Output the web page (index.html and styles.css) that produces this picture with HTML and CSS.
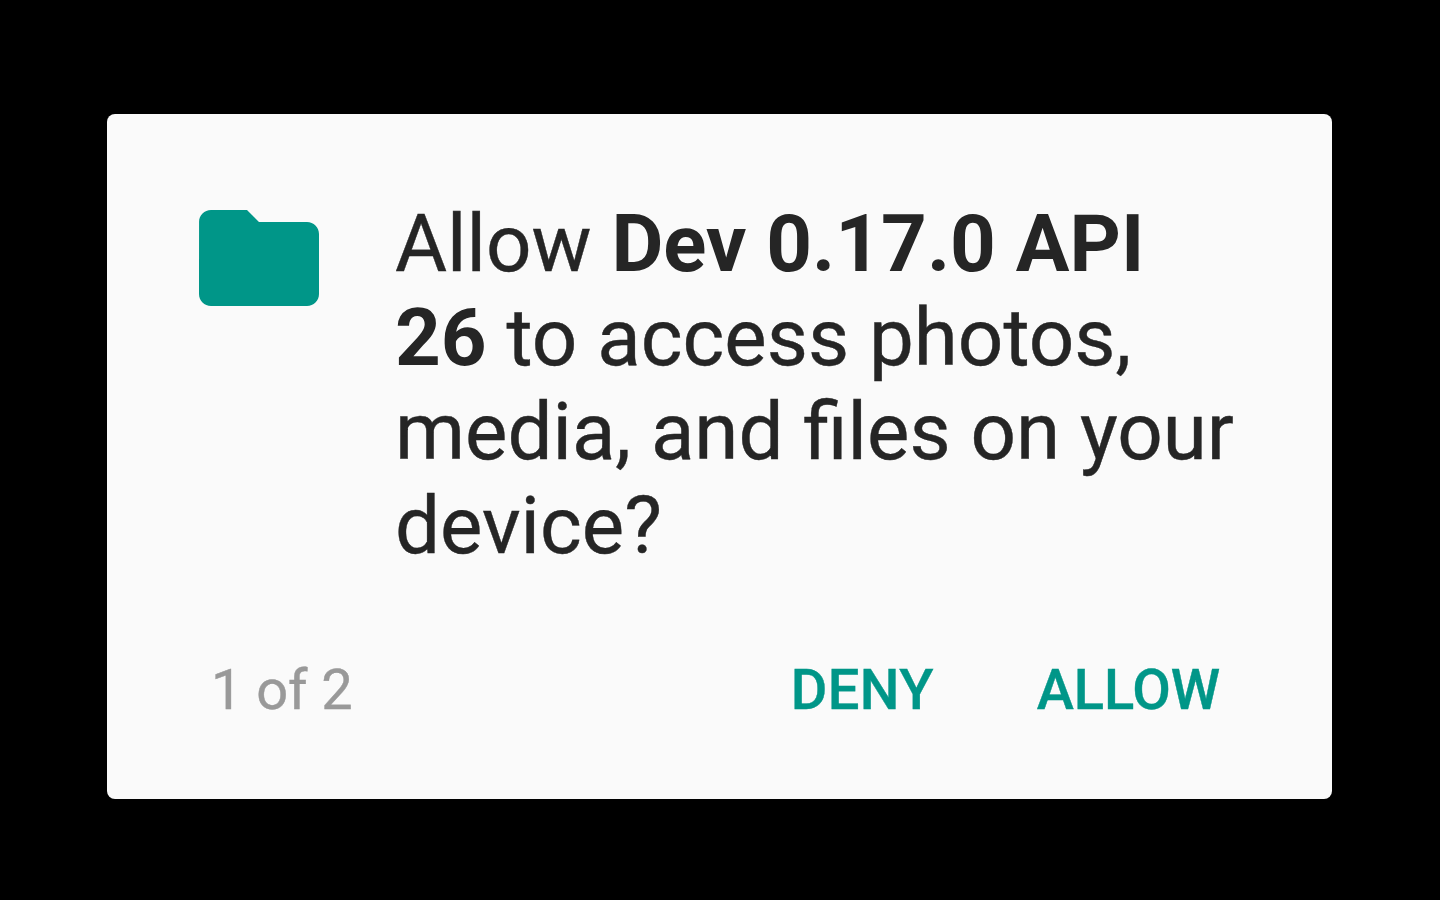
FILE: index.html
```html
<!DOCTYPE html>
<html lang="en">
<head>
<meta charset="utf-8">
<title>Permission request</title>
<link rel="stylesheet" href="styles.css">
</head>
<body>
<main class="dialog" role="dialog" aria-labelledby="message">
  <div class="content">
    <svg class="folder" viewBox="2 4 20 16" aria-hidden="true"><path d="M10 4H4c-1.1 0-1.99.9-1.99 2L2 18c0 1.1.9 2 2 2h16c1.1 0 2-.9 2-2V8c0-1.1-.9-2-2-2h-8l-2-2z"/></svg>
    <p class="message" id="message">Allow <b>Dev 0.17.0 API<br>26</b> to access photos,<br>media, and files on your<br>device?</p>
  </div>
  <div class="actions">
    <span class="count">1 of 2</span>
    <button class="button deny">DENY</button>
    <button class="button allow">ALLOW</button>
  </div>
</main>
</body>
</html>
```
FILE: styles.css
```css
* { box-sizing: border-box; }
body {
  margin: 0;
  height: 900px;
  padding: 114px 108px 101px 107px;
  background: #000;
  font-family: Roboto, sans-serif;
  overflow: hidden;
}
.dialog {
  height: 685px;
  padding: 83px 92px 0;
  border-radius: 8px;
  background: #fafafa;
}
.content { display: flex; height: 451px; }
.folder {
  flex: none;
  width: 120px;
  height: 96px;
  margin: 13px 76px 0 0;
  fill: #009688;
}
.message {
  margin: 0;
  color: #252525;
  font-size: 79.9px;
  line-height: 94px;
  white-space: nowrap;
  -webkit-text-stroke: 0.4px #252525;
}
.message b { -webkit-text-stroke: 0; }
.actions {
  display: flex;
  align-items: center;
  height: 84px;
  padding: 0 20px 0 12px;
}
.count {
  margin-right: auto;
  color: #999;
  font-size: 56px;
  letter-spacing: -0.1px;
  -webkit-text-stroke: 0.4px #999;
}
.button {
  padding: 0;
  border: 0;
  background: none;
  color: #009688;
  font: 500 56px Roboto, sans-serif;
  -webkit-text-stroke: 0.4px #009688;
}
.deny { margin-right: 103px; letter-spacing: 0.4px; }
.allow { letter-spacing: -0.1px; }
```
